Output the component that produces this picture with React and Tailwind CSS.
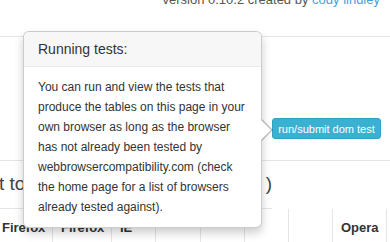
export default function App() {
  const cols = [
    { w: "w-[59px]", t: "Firefox", s: "3.6" },
    { w: "w-[59px]", t: "Firefox", s: "4" },
    { w: "w-[44px]", t: "IE", s: "6" },
    { w: "w-[45px]", t: "", s: "7" },
    { w: "w-[44px]", t: "", s: "8" },
    { w: "w-[44px]", t: "", s: "9" },
    { w: "w-[44px]", t: "", s: "10" },
    { w: "w-[54px]", t: "Opera", s: "11" },
    { w: "w-[40px]", t: "", s: "" },
  ];
  return (
    <div className="relative w-[390px] h-[242px] overflow-hidden bg-white text-[#333] font-['Liberation_Sans','Helvetica',Arial,sans-serif]">
      {/* header */}
      <div className="h-[37px] border-b border-[#e5e5e5] flex justify-end pr-[10px]">
        <div className="-mt-[9px] text-[13px] leading-[18px] text-[#555]">
          version 0.10.2 created by <span className="text-[#4a9fd8]">cody lindley</span>
        </div>
      </div>
      {/* button section */}
      <div className="h-[124px] border-b border-[#e5e5e5] flex justify-end items-start pt-[81px] pr-[9px]">
        <button className="w-[109px] h-[21px] flex items-center justify-center rounded-[3px] bg-[#3bb1d2] border border-[#2ea3c4] text-white text-[11px] leading-[18px]">
          run/submit dom test
        </button>
      </div>
      {/* heading row */}
      <div className="h-[48px] border-b border-[#e5e5e5] flex items-center w-[272px] justify-between">
        <span className="text-[19px] text-[#444] -ml-[1px]">t to see the results</span>
        <span className="text-[19px] text-[#444]">)</span>
      </div>
      {/* table header */}
      <div className="flex -ml-[6px]">
        {cols.map((c, i) => (
          <div key={i} className={`${c.w} shrink-0 border-r border-[#e5e5e5] flex flex-col`}>
            <div className="h-[28px] pl-[8px] pt-[10px] text-[13px] leading-[17px] font-bold whitespace-nowrap">{c.t}</div>
            <div className="pl-[8px] pt-[2px] text-[12px] leading-[16px] text-[#bbb]">{c.s}</div>
          </div>
        ))}
      </div>

      {/* popover */}
      <div className="absolute left-[23px] top-[31px] w-[239px] h-[197px] bg-white border border-[rgba(0,0,0,0.2)] rounded-[6px] shadow-[0_5px_10px_rgba(0,0,0,0.2)]">
        <div className="px-[14px] py-[8px] bg-[#f7f7f7] border-b border-[#ebebeb] rounded-t-[5px] text-[14px] leading-[18px] text-[#333]">
          Running tests:
        </div>
        <div className="px-[14px] pt-[10px] pb-[9px] text-[12px] leading-[20px] text-[#333]">
          You can run and view the tests that produce the tables on this page in your own browser as long as the browser has not already been tested by webbrowsercompatibility.com (check the home page for a list of browsers already tested against).
        </div>
        <div className="absolute left-[calc(100%+1px)] top-[87px] w-0 h-0 border-y-[11px] border-y-transparent border-l-[11px] border-l-[rgba(0,0,0,0.25)]"></div>
        <div className="absolute left-full top-[88px] w-0 h-0 border-y-[10px] border-y-transparent border-l-[10px] border-l-white"></div>
      </div>
    </div>
  );
}
